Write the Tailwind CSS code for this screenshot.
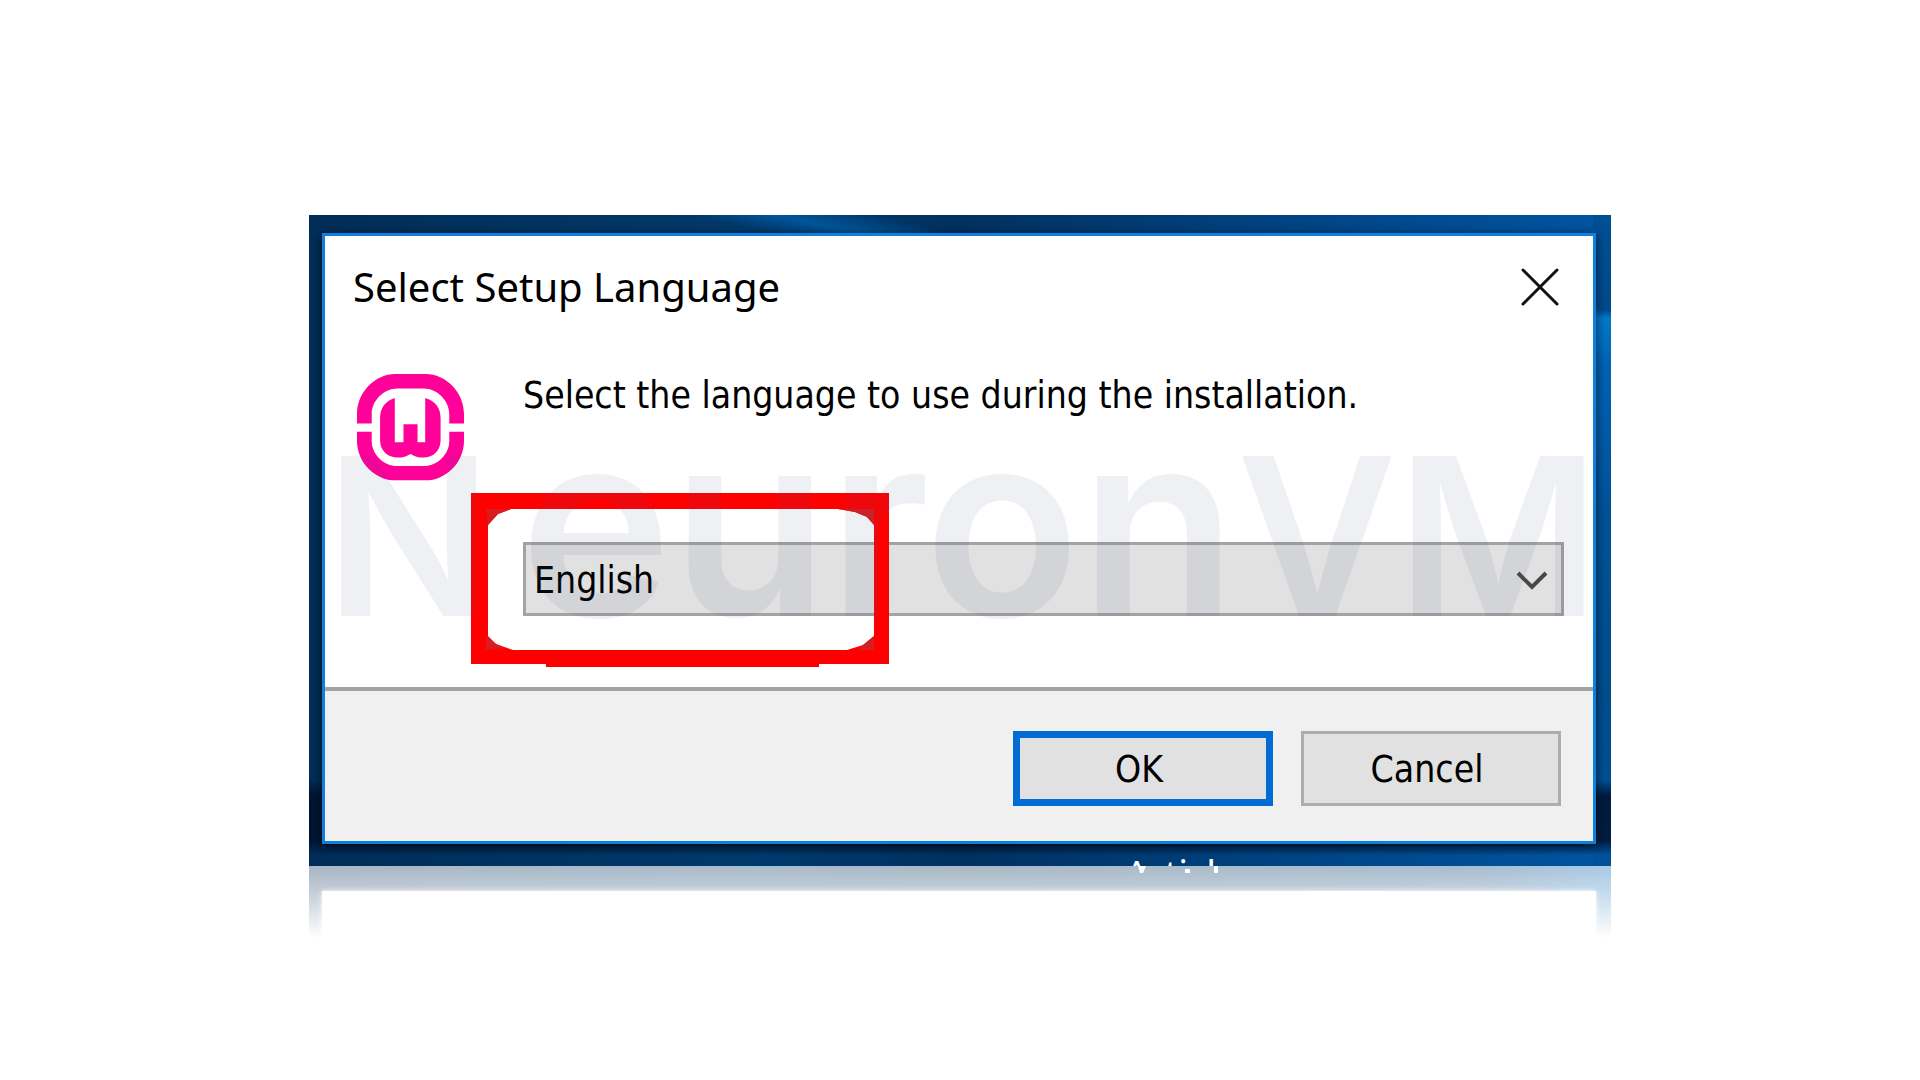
<!DOCTYPE html>
<html lang="en">
<head>
<meta charset="utf-8">
<meta name="viewport" content="width=device-width, initial-scale=1">
<title>Select Setup Language</title>
<script src="https://cdn.jsdelivr.net/npm/@tailwindcss/browser@4"></script>
</head>
<body class="bg-white text-black">
<main class="grid min-h-screen place-items-center">
  <div class="relative w-full max-w-[1302px]">

    <!-- desktop wallpaper around the dialog -->
    <div class="bg-[linear-gradient(180deg,transparent_565px,#000f2acc_580px,#000f2acc_625px,transparent_640px),linear-gradient(180deg,#004f94_0px,#004a8b_95px,#007ac8_103px,#0062b4_150px,#005298_300px,#004d8d_480px,#00519a_652px),linear-gradient(12deg,transparent_30%,#00559a_55%,transparent_85%),linear-gradient(90deg,#002d57,#003a6c_35%,#003160_50%,#00478a_80%,#0055a2)] bg-[size:100%_100%,18px_100%,260px_18px,100%_100%] bg-[position:0_0,100%_0,360px_0,0_0] bg-no-repeat pt-[18px] pr-[15px] pl-[13px]">

      <section role="dialog" aria-labelledby="title" class="relative border-[3px] border-[#1080dc] bg-white shadow-[0_2px_10px_rgba(0,0,0,0.6)]">
        <header class="flex items-center justify-between pt-[27px] pr-[34px] pl-7">
          <h1 id="title" class="font-['Noto_Sans',sans-serif] text-[40px] leading-[48px]">Select Setup Language</h1>
          <button type="button" aria-label="Close">
            <svg class="h-[38px] w-[38px]" viewBox="0 0 38 38" fill="none" stroke="#111" stroke-width="3" stroke-linecap="round"><path d="M2 2 36 36M36 2 2 36"/></svg>
          </button>
        </header>

        <div class="flex gap-[59px] pt-[63px] pr-[29px] pb-[71px] pl-8 font-['DejaVu_Sans_Condensed','DejaVu_Sans',sans-serif] text-[37px] leading-[44px]">
          <svg class="h-[107px] w-[107px] shrink-0" viewBox="0 0 320 320" role="img" aria-label="WampServer">
            <g fill="#ff0099">
              <path d="M0 148V120C0 54 54 0 115 0H205C266 0 320 54 320 120V148H276V120C276 80 240 43 200 43H120C80 43 44 80 44 120V148Z"/>
              <path d="M0 173V200C0 264 54 318 115 318H205C266 318 320 264 320 200V173H276V200C276 240 240 275 200 275H120C80 275 44 240 44 200V173Z"/>
              <path d="M113 72V204H139V150H181V204H204V72C232 80 250 100 250 132V198C250 232 224 250 198 250C182 250 172 246 160 239C148 246 138 250 122 250C96 250 69 232 69 198V132C69 100 87 80 113 72Z"/>
            </g>
          </svg>
          <div class="grow">
            <label for="language" class="block">Select the language to use during the installation.</label>
            <div class="relative mt-[124px]">
              <select id="language" class="block h-[74px] w-full appearance-none border-[3px] border-[#a3a3a3] bg-[#e1e1e1] pt-1 pl-2">
                <option>English</option>
              </select>
              <svg class="pointer-events-none absolute top-[29px] right-4 h-5 w-8" viewBox="0 0 32 20" fill="none" stroke="#484848" stroke-width="4"><path d="M2 2 16 16 30 2"/></svg>
              <svg class="pointer-events-none absolute -top-[49px] -left-[52px] h-[174px] w-[418px]" viewBox="0 0 418 174" aria-hidden="true">
                <path fill="#f00" fill-rule="evenodd" d="M0 0H418V171H348V174H75V171H0ZM40 16 27 21 17 32V143L25 151 42 157H376L392 152 403 143V32L396 24 384 19 367 16Z"/>
                <path fill="#d81c20" d="M15 16H40L27 21 17 32ZM367 16H403V32L396 24 384 19ZM15 157V143L25 151 34 155ZM386 157 403 143V157Z"/>
              </svg>
            </div>
          </div>
        </div>

        <footer class="flex justify-end gap-7 border-t-4 border-[#a3a3a3] bg-[#f0f0f0] pt-10 pr-8 pb-[35px] font-['DejaVu_Sans_Condensed','DejaVu_Sans',sans-serif] text-[37px] leading-[44px]">
          <button type="button" class="h-[75px] w-[260px] border-[7px] border-[#006cd4] bg-[#e1e1e1] pt-1 pr-2">OK</button>
          <button type="button" class="h-[75px] w-[260px] border-[3px] border-[#adadad] bg-[#e1e1e1] pt-1 pr-2">Cancel</button>
        </footer>

        <!-- watermark lies over the dialog -->
        <div class="pointer-events-none absolute top-[162px] left-0 flex items-baseline font-['Inter',sans-serif] leading-[250px] font-semibold whitespace-nowrap text-[#3c5082]/[0.085]" aria-hidden="true">
          <span class="pr-7 text-[220px]">N</span><span class="text-[256px]">euron</span><span class="text-[220px]">VM</span>
        </div>
      </section>

      <div class="h-[22px] overflow-hidden pt-[10px] pl-[63%] font-['Noto_Sans',sans-serif] text-[38px] leading-[38px] text-white">Articl</div>
    </div>

    <!-- reflection -->
    <div class="absolute inset-x-0 top-full h-[72px] bg-[linear-gradient(90deg,#002850,#003463_35%,#002c55_50%,#003c72_90%,#0060b4)] [mask-image:linear-gradient(180deg,rgba(0,0,0,0.34),rgba(0,0,0,0.22)_40%,transparent)] pt-[25px] pr-[15px] pl-[13px]" aria-hidden="true">
      <div class="h-12 bg-white shadow-[0_0_5px_#fff]"></div>
    </div>
    <svg class="absolute top-full left-[63%] h-2 w-[110px]" viewBox="0 0 110 8" fill="#fff" aria-hidden="true"><path d="M9 0h8l-3 7h-3zM56 3h5v4h-5zM85 0h4v7h-4z"/></svg>
  </div>
</main>
</body>
</html>
